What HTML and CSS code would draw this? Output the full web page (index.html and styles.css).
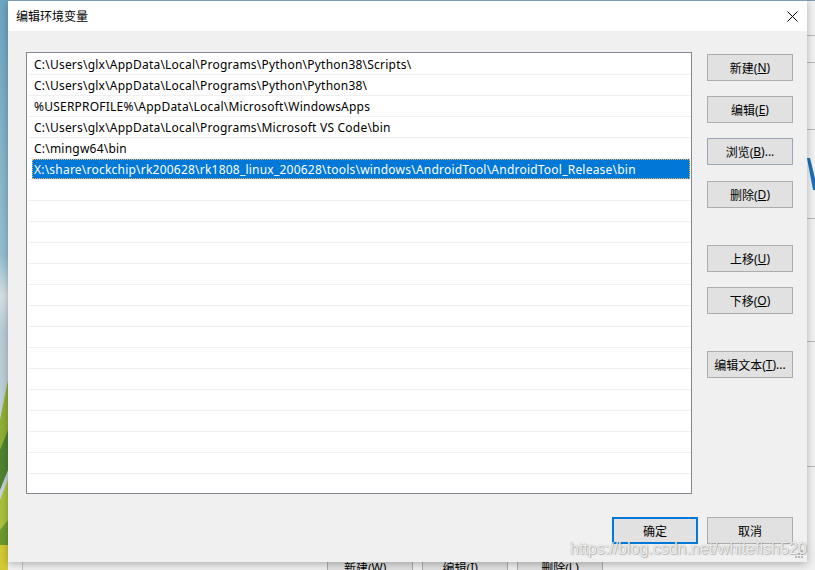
FILE: index.html
```html
<!DOCTYPE html>
<html lang="zh-CN">
<head>
<meta charset="utf-8">
<title>编辑环境变量</title>
<link rel="stylesheet" href="styles.css">
</head>
<body>
<div class="desktop">
  <svg class="wallpaper" width="8" height="570" viewBox="0 0 8 570">
    <defs>
      <linearGradient id="sky" x1="0" y1="0" x2="0" y2="1">
        <stop offset="0" stop-color="#6aa6c2"/>
        <stop offset="0.45" stop-color="#95bfd1"/>
        <stop offset="0.52" stop-color="#d6e2e7"/>
        <stop offset="0.58" stop-color="#b9cdd7"/>
        <stop offset="1" stop-color="#c9d5da"/>
      </linearGradient>
    </defs>
    <rect x="0" y="0" width="8" height="570" fill="url(#sky)"/>
    <polygon points="0,420 8,380 8,440 0,470" fill="#8fb035"/>
    <polygon points="0,450 8,430 8,470 0,490" fill="#4f8430"/>
    <polygon points="0,500 8,480 8,540 0,545" fill="#a9c23c"/>
    <polygon points="0,530 8,520 8,560 0,560" fill="#6f9a2e"/>
    <rect x="0" y="545" width="8" height="25" fill="#d3ca33"/>
  </svg>

  <svg class="backwin-right" width="8" height="570" viewBox="0 0 8 570">
    <rect x="0" y="0" width="8" height="570" fill="#f2f2f2"/>
    <rect x="0" y="0" width="8" height="1" fill="#7d9cb5"/>
    <rect x="0" y="35" width="8" height="1" fill="#b9b9b9"/>
    <rect x="0" y="62" width="8" height="1" fill="#b9b9b9"/>
    <rect x="0" y="129" width="8" height="1" fill="#b9b9b9"/>
    <rect x="0" y="218" width="8" height="1" fill="#b9b9b9"/>
    <rect x="0" y="341" width="8" height="1" fill="#b9b9b9"/>
    <rect x="0" y="466" width="8" height="1" fill="#b9b9b9"/>
    <polygon points="0,158 3,158 8,178 8,190 6,190" fill="#1f6fb6"/>
  </svg>

  <div class="backwin-bottom">
    <div class="bw-edge"></div>
    <div class="bw-btns">
      <span class="bw-btn">新建(<u>W</u>)...</span>
      <span class="bw-btn">编辑(<u>I</u>)...</span>
      <span class="bw-btn">删除(<u>L</u>)</span>
    </div>
  </div>

  <div class="dialog">
    <div class="titlebar">
      <span class="title">编辑环境变量</span>
      <svg class="close" width="11" height="11" viewBox="0 0 11 11">
        <path d="M0.5 0.5 L10.5 10.5 M10.5 0.5 L0.5 10.5" stroke="#000" stroke-width="1" fill="none"/>
      </svg>
    </div>
    <div class="body">
      <div class="main">
        <div class="list">
          <div class="row"><div class="cell">C:\Users\glx\AppData\Local\Programs\Python\Python38\Scripts\</div></div>
          <div class="row"><div class="cell">C:\Users\glx\AppData\Local\Programs\Python\Python38\</div></div>
          <div class="row"><div class="cell">%USERPROFILE%\AppData\Local\Microsoft\WindowsApps</div></div>
          <div class="row"><div class="cell">C:\Users\glx\AppData\Local\Programs\Microsoft VS Code\bin</div></div>
          <div class="row"><div class="cell">C:\mingw64\bin</div></div>
          <div class="row sel"><div class="cell">X:\share\rockchip\rk200628\rk1808_linux_200628\tools\windows\AndroidTool\AndroidTool_Release\bin</div></div>
          <div class="row"><div class="cell"></div></div>
          <div class="row"><div class="cell"></div></div>
          <div class="row"><div class="cell"></div></div>
          <div class="row"><div class="cell"></div></div>
          <div class="row"><div class="cell"></div></div>
          <div class="row"><div class="cell"></div></div>
          <div class="row"><div class="cell"></div></div>
          <div class="row"><div class="cell"></div></div>
          <div class="row"><div class="cell"></div></div>
          <div class="row"><div class="cell"></div></div>
          <div class="row"><div class="cell"></div></div>
          <div class="row"><div class="cell"></div></div>
          <div class="row"><div class="cell"></div></div>
          <div class="row"><div class="cell"></div></div>
          <div class="row"><div class="cell"></div></div>
        </div>
        <div class="side">
          <button class="btn">新建(<u>N</u>)</button>
          <button class="btn">编辑(<u>E</u>)</button>
          <button class="btn hover">浏览(<u>B</u>)...</button>
          <button class="btn nudge">删除(<u>D</u>)</button>
          <button class="btn group">上移(<u>U</u>)</button>
          <button class="btn">下移(<u>O</u>)</button>
          <button class="btn group">编辑文本(<u>T</u>)...</button>
        </div>
      </div>
      <div class="footer">
        <button class="btn default">确定</button>
        <button class="btn">取消</button>
      </div>
    </div>
    <svg class="grip" width="8" height="8" viewBox="0 0 8 8">
      <rect x="6" y="0" width="2" height="2" fill="#b8b8b8"/>
      <rect x="3" y="3" width="2" height="2" fill="#b8b8b8"/>
      <rect x="6" y="3" width="2" height="2" fill="#b8b8b8"/>
      <rect x="0" y="6" width="2" height="2" fill="#b8b8b8"/>
      <rect x="3" y="6" width="2" height="2" fill="#b8b8b8"/>
      <rect x="6" y="6" width="2" height="2" fill="#b8b8b8"/>
    </svg>
  </div>

  <div class="watermark">https://blog.csdn.net/whitefish520</div>
</div>
</body>
</html>
```
FILE: styles.css
```css
html, body {
  margin: 0;
  padding: 0;
}
body {
  width: 815px;
  height: 570px;
  overflow: hidden;
  font-family: "Noto Sans", "Noto Sans CJK SC", sans-serif;
  font-size: 12px;
  color: #000;
}
.desktop {
  position: relative;
  width: 815px;
  height: 570px;
  background: #f0f0f0;
  overflow: hidden;
}
.wallpaper {
  position: absolute;
  left: 0;
  top: 0;
  display: block;
}
.backwin-right {
  position: absolute;
  left: 807px;
  top: 0;
  display: block;
}
.backwin-bottom {
  position: absolute;
  left: 8px;
  top: 540px;
  width: 807px;
  height: 30px;
  background: #f0f0f0;
  display: flex;
}
.bw-edge {
  width: 14px;
  height: 30px;
  border-right: 1px solid #c4c4c4;
  background: #f4f4f4;
}
.bw-btns {
  display: flex;
  gap: 9px;
  padding-left: 304px;
  padding-top: 14px;
}
.bw-btn {
  width: 86px;
  height: 27px;
  box-sizing: border-box;
  border: 1px solid #adadad;
  background: #e1e1e1;
  display: flex;
  align-items: center;
  justify-content: center;
  white-space: nowrap;
}
.dialog {
  position: absolute;
  left: 8px;
  top: 0;
  width: 799px;
  height: 562px;
  background: #f0f0f0;
  box-shadow: 0 2px 8px rgba(0, 0, 0, 0.28);
  display: flex;
  flex-direction: column;
}
.titlebar {
  height: 31px;
  box-sizing: border-box;
  border-top: 1px solid #7d9cb5;
  background: #fff;
  display: flex;
  align-items: center;
  justify-content: space-between;
  padding: 0 9px 0 8px;
}
.title {
  font-family: "Noto Sans CJK SC", sans-serif;
  font-size: 12px;
  line-height: 16px;
}
.close {
  display: block;
}
.body {
  flex: 1;
  padding: 21px 14px 18px 18px;
  display: flex;
  flex-direction: column;
}
.main {
  display: flex;
  gap: 15px;
}
.list {
  width: 666px;
  height: 442px;
  box-sizing: border-box;
  border: 1px solid #828790;
  background: #fff;
  padding-top: 1px;
  overflow: hidden;
}
.row {
  margin-left: 1px;
  height: 20px;
  border-bottom: 1px solid #f0f0f0;
}
.cell {
  margin-left: 4px;
  margin-right: 1px;
  padding-left: 2px;
  height: 20px;
  line-height: 22px;
  letter-spacing: 0.22px;
  white-space: nowrap;
  overflow: hidden;
}
.row.sel .cell {
  background: #0078d7;
  color: #fff;
  outline: 1px dotted #f2b673;
  outline-offset: -1px;
}
.side {
  width: 86px;
  display: flex;
  flex-direction: column;
  gap: 15px;
  padding-top: 2px;
}
.btn {
  width: 86px;
  height: 27px;
  box-sizing: border-box;
  border: 1px solid #adadad;
  background: #e1e1e1;
  font: inherit;
  color: #000;
  padding: 0;
  margin: 0;
  display: flex;
  align-items: center;
  justify-content: center;
  white-space: nowrap;
}
.btn.hover {
  border-color: #9aa6b8;
}
.btn.nudge {
  margin-top: 1px;
}
.btn.group {
  margin-top: 22px;
}
.btn.default {
  border: 2px solid #0078d7;
}
.footer {
  margin-top: 23px;
  display: flex;
  justify-content: flex-end;
  gap: 9px;
}
.grip {
  position: absolute;
  right: 4px;
  bottom: 4px;
  display: block;
}
.watermark {
  position: absolute;
  left: 570px;
  top: 539px;
  font-family: "Liberation Sans", Arial, sans-serif;
  font-size: 16px;
  line-height: 20px;
  color: rgba(255, 255, 255, 0.85);
  text-shadow: 0 0 1px rgba(90, 90, 90, 0.6), 1px 1px 1px rgba(90, 90, 90, 0.35);
  white-space: nowrap;
}
```
